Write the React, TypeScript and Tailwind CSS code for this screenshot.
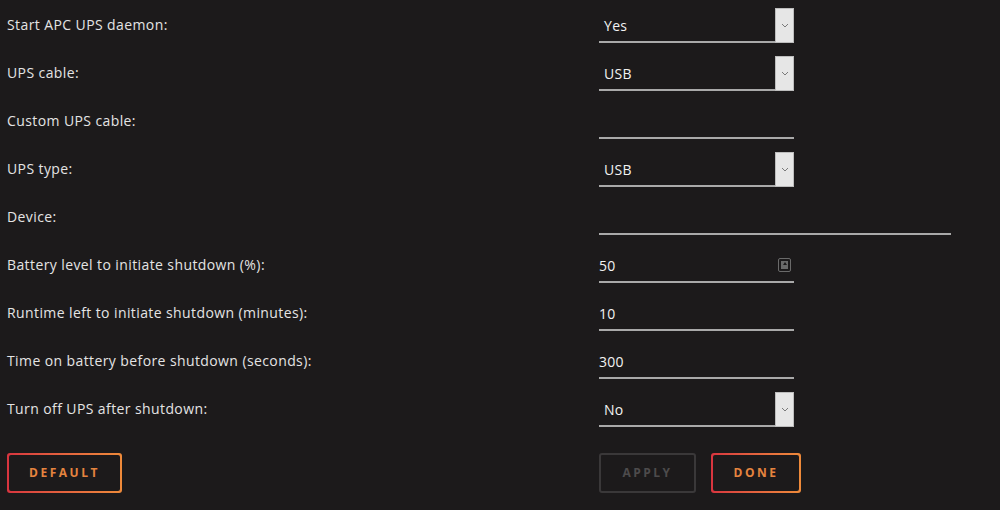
import React from 'react';

type Row = {
  label: string;
  kind: 'select' | 'text' | 'number';
  value: string;
  wide?: boolean;
};

const rows: Row[] = [
  { label: 'Start APC UPS daemon:', kind: 'select', value: 'Yes' },
  { label: 'UPS cable:', kind: 'select', value: 'USB' },
  { label: 'Custom UPS cable:', kind: 'text', value: '' },
  { label: 'UPS type:', kind: 'select', value: 'USB' },
  { label: 'Device:', kind: 'text', value: '', wide: true },
  { label: 'Battery level to initiate shutdown (%):', kind: 'number', value: '50' },
  { label: 'Runtime left to initiate shutdown (minutes):', kind: 'text', value: '10' },
  { label: 'Time on battery before shutdown (seconds):', kind: 'text', value: '300' },
  { label: 'Turn off UPS after shutdown:', kind: 'select', value: 'No' },
];

const Chevron = () => (
  <svg width="8" height="5" viewBox="0 0 8 5" fill="none">
    <path d="M1 1l3 3 3-3" stroke="#7a7a7a" strokeWidth="1" />
  </svg>
);

// small spin-button glyph shown at the right of the number field
const SpinIcon = () => (
  <div className="w-[13px] h-[14px] border border-[#6a6a6a] rounded-[2px] flex items-center justify-center">
    <div className="w-[7px] h-[8px] bg-[#6a6a6a] flex items-start justify-center pt-[1px]">
      <div className="w-0 h-0 border-l-[2px] border-r-[2px] border-b-[3px] border-l-transparent border-r-transparent border-b-[#1c1a1b]" />
    </div>
  </div>
);

const Field = ({ row }: { row: Row }) => {
  const width = row.wide ? 'w-[352px]' : 'w-[195px]';
  return (
    <div className={`${width} h-[35px] mt-[8px] border-b-2 border-[#a9a9a9] flex items-stretch`}>
      <div className={`flex-1 flex items-center ${row.kind === 'select' ? 'pl-[5px]' : 'pl-0'} pt-[2px] text-[14px] tracking-[0.3px] text-[#f2f2f2]`}>
        {row.value}
      </div>
      {row.kind === 'select' && (
        <div className="w-[19px] bg-[#e6e6e6] border border-[#bdbdbd] flex items-center justify-center mb-[-2px]">
          <Chevron />
        </div>
      )}
      {row.kind === 'number' && (
        <div className="flex items-center pr-[3px] pt-[1px]">
          <SpinIcon />
        </div>
      )}
    </div>
  );
};

export default function App() {
  return (
    <div
      className="w-[1000px] h-[510px] bg-[#1c1a1b] overflow-hidden px-[7px]"
      style={{ fontFamily: '"Open Sans", "Noto Sans", sans-serif' }}
    >
      {rows.map((row) => (
        <div key={row.label} className="h-[48px] flex">
          <div className="w-[592px] flex items-center text-[14px] tracking-[0.4px] text-[#e4e4e4] pt-[1px]">{row.label}</div>
          <Field row={row} />
        </div>
      ))}

      <div className="flex mt-[21px]">
        <div className="w-[592px]">
          <button className="w-[115px] h-[40px] rounded-[3px] p-[2px] bg-gradient-to-r from-[#d8343f] to-[#ee8a3a]">
            <span className="w-full h-full rounded-[2px] bg-[#1c1a1b] flex items-center justify-center text-[12px] font-bold tracking-[2.5px] text-[#e5843f]">
              DEFAULT
            </span>
          </button>
        </div>
        <div className="flex gap-[15px]">
          <button className="w-[97px] h-[40px] rounded-[3px] border-2 border-[#3a3839] flex items-center justify-center text-[12px] font-bold tracking-[2.5px] text-[#4d4b4c]">
            APPLY
          </button>
          <button className="w-[90px] h-[40px] rounded-[3px] p-[2px] bg-gradient-to-r from-[#d8343f] to-[#ee8a3a]">
            <span className="w-full h-full rounded-[2px] bg-[#1c1a1b] flex items-center justify-center text-[12px] font-bold tracking-[2.5px] text-[#e5843f]">
              DONE
            </span>
          </button>
        </div>
      </div>
    </div>
  );
}
